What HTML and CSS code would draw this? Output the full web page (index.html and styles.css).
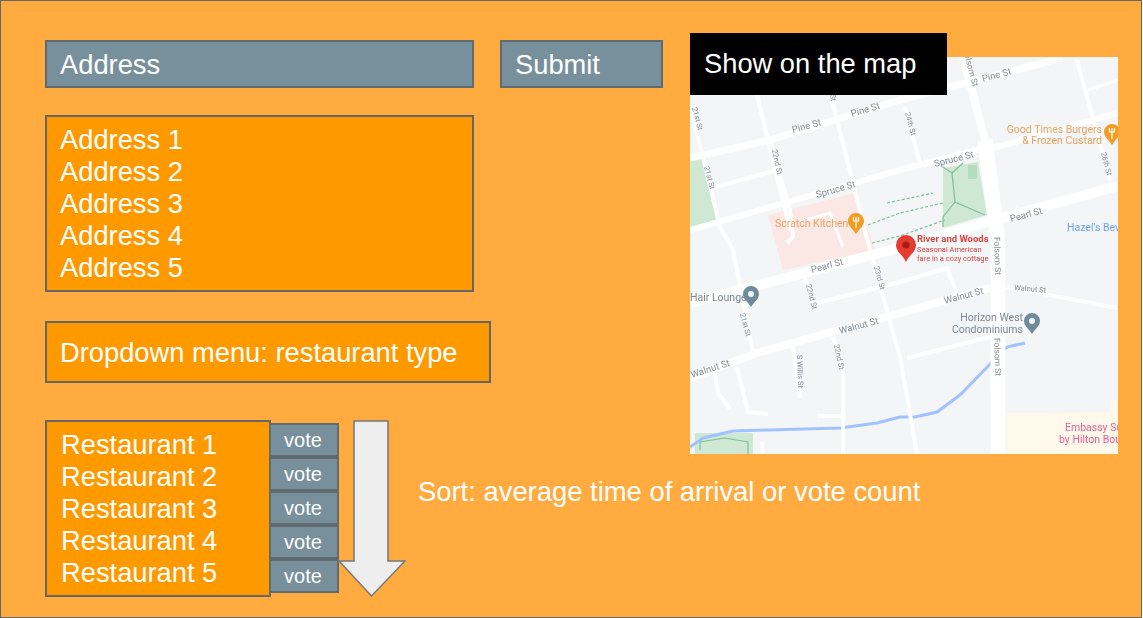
FILE: index.html
```html
<!DOCTYPE html>
<html lang="en">
<head>
    <meta charset="UTF-8">
    <meta name="viewport" content="width=device-width, initial-scale=1.0">
    <title>Restaurant Picker</title>
    <link rel="stylesheet" href="styles.css">
</head>
<body>
    <div class="frame">
        <!-- Left column -->
        <div class="left">
            <div class="search">
                <div class="box slate address">Address</div>
                <div class="box slate submit">Submit</div>
            </div>

            <div class="box orange results">
                <div>Address 1</div>
                <div>Address 2</div>
                <div>Address 3</div>
                <div>Address 4</div>
                <div>Address 5</div>
            </div>

            <div class="box orange dropdown">Dropdown menu: restaurant type</div>

            <div class="restaurants">
                <div class="box orange restaurant-list">
                    <div>Restaurant 1</div>
                    <div>Restaurant 2</div>
                    <div>Restaurant 3</div>
                    <div>Restaurant 4</div>
                    <div>Restaurant 5</div>
                </div>
                <div class="votes">
                    <div class="vote">vote</div>
                    <div class="vote">vote</div>
                    <div class="vote">vote</div>
                    <div class="vote">vote</div>
                    <div class="vote">vote</div>
                </div>
                <svg class="arrow" width="68" height="178" viewBox="0 0 68 178">
                    <path d="M16 1H50V141H67L33.500 176L1 141H16Z" fill="#eeeeee" stroke="#777777" stroke-width="1.500"/>
                </svg>
                <div class="sort">Sort: average time of arrival or vote count</div>
            </div>
        </div>

        <!-- Map -->
        <div class="map">
            <div class="map-label">Show on the map</div>
            <svg class="map-art" width="428" height="397" viewBox="690 57 428 397">
                <rect x="690" y="57" width="428" height="397" fill="#f4f5f7"/>

                <!-- Areas -->
                <polygon points="690,160 705,157 719,222 690,230" fill="#cfe8d4"/>
                <polygon points="768,215 855,193 875,250 783,270" fill="#fbe7e4"/>
                <polygon points="943,168 978,162 987,215 943,228" fill="#cfe8d4"/>
                <rect x="968" y="165" width="9" height="14" fill="#b5dcbd"/>
                <polygon points="695,433 753,433 753,454 695,454" fill="#cfe8d4"/>
                <polygon points="1007,413 1110,412 1110,400 1118,400 1118,454 1007,454" fill="#fef9ea"/>

                <!-- Creek, roads cross over it -->
                <polyline fill="none" stroke="#a0c3ff" stroke-width="3" points="690,447 703,438 733,431 840,428 877,423 900,417 915,417 937,412 960,395 992,362 1007,347 1025,343"/>

                <!-- Roads -->
                <g fill="none" stroke="#ffffff" stroke-linejoin="round">
                    <polyline stroke-width="7" points="690,158 770,140 900,100 977,80 1043,63 1062,57"/>
                    <polyline stroke-width="6" points="690,230 900,170 977,150 997,147 1118,113"/>
                    <polyline stroke-width="10" points="690,303 880,253 987,222 1118,186"/>
                    <polyline stroke-width="8" points="690,378 757,353 900,313 990,288"/>
                    <polyline stroke-width="4" points="1007,287 1117,308"/>
                    <polyline stroke-width="8" points="963,57 985,140"/>
                    <polyline stroke-width="15" points="985,140 997,233 998,250 998,454"/>
                    <polyline stroke-width="4" points="757,95 790,230"/>
                    <polyline stroke-width="4" points="830,93 837,120 870,250 900,357 917,454"/>
                    <polyline stroke-width="4" points="690,107 703,157 720,227 733,250 753,352"/>
                    <polyline stroke-width="4" points="770,140 790,210 793,237 787,243"/>
                    <polyline stroke-width="3" points="800,222 830,213 843,247"/>
                    <polyline stroke-width="4" points="805,278 815,310"/>
                    <polyline stroke-width="4" points="833,337 843,370 843,454"/>
                    <polyline stroke-width="4" points="905,107 920,163"/>
                    <polyline stroke-width="4" points="1077,60 1110,180"/>
                    <polyline stroke-width="3" points="1088,90 1118,80"/>
                    <polyline stroke-width="4" points="713,188 777,170"/>
                    <polyline stroke-width="4" points="817,303 900,282 947,268 957,293"/>
                    <polyline stroke-width="4" points="907,358 990,337"/>
                    <polyline stroke-width="4" points="737,367 748,412 768,414"/>
                    <polyline stroke-width="4" points="715,373 718,393 730,409"/>
                    <polyline stroke-width="4" points="793,347 800,398"/>
                    <polyline stroke-width="4" points="817,416 843,416"/>
                    <polyline stroke-width="4" points="762,442 763,454"/>
                </g>

                <!-- Park paths -->
                <g fill="none" stroke="#7fc096" stroke-width="1.200">
                    <polyline points="943,167 952,173 955,202 985,215"/>
                    <polyline points="963,163 952,173"/>
                    <polyline points="955,202 943,217 943,227"/>
                    <polyline points="700,450 700,442 725,438 748,442 748,454"/>
                    <g stroke-dasharray="3 2">
                        <polyline points="887,203 933,193"/>
                        <polyline points="868,225 900,213 943,203"/>
                        <polyline points="872,243 900,236 945,220"/>
                    </g>
                </g>

                <!-- Street names -->
                <g class="street">
                    <text transform="translate(793,133) rotate(-15)">Pine St</text>
                    <text transform="translate(852,117) rotate(-17)">Pine St</text>
                    <text transform="translate(983,82) rotate(-15)">Pine St</text>
                    <text transform="translate(817,198) rotate(-16)">Spruce St</text>
                    <text transform="translate(935,167) rotate(-14)">Spruce St</text>
                    <text transform="translate(812,273) rotate(-15)">Pearl St</text>
                    <text transform="translate(1011,222) rotate(-15)">Pearl St</text>
                    <text transform="translate(692,378) rotate(-18)">Walnut St</text>
                    <text transform="translate(840,334) rotate(-15)">Walnut St</text>
                    <text transform="translate(945,304) rotate(-15)">Walnut St</text>
                    <text class="tiny" transform="translate(1014,290) rotate(5)">Walnut St</text>
                    <text transform="translate(994,338) rotate(88)" class="small">Folsom St</text>
                    <text transform="translate(994,237) rotate(88)" class="small">Folsom St</text>
                    <text transform="translate(963,50) rotate(75)" class="small">Folsom St</text>
                    <text class="tiny" transform="translate(772,150) rotate(78)">22nd St</text>
                    <text class="tiny" transform="translate(692,108) rotate(75)">21st St</text>
                    <text class="tiny" transform="translate(704,167) rotate(75)">21st St</text>
                    <text class="tiny" transform="translate(740,314) rotate(75)">21st St</text>
                    <text class="tiny" transform="translate(806,285) rotate(75)">22nd St</text>
                    <text class="tiny" transform="translate(834,345) rotate(78)">22nd St</text>
                    <text class="tiny" transform="translate(797,355) rotate(88)">S Willis St</text>
                    <text class="tiny" transform="translate(874,267) rotate(75)">23rd St</text>
                    <text class="tiny" transform="translate(905,113) rotate(75)">24th St</text>
                    <text class="tiny" transform="translate(1101,153) rotate(75)">26th St</text>
                    <text class="tiny" transform="translate(827,78) rotate(80)">23rd St</text>
                </g>

                <!-- Places -->
                <g class="place">
                    <text x="775" y="227" fill="#e8a45e">Scratch Kitchen</text>
                    <text x="1102" y="133" text-anchor="end" fill="#e8a45e">Good Times Burgers</text>
                    <text x="1102" y="144" text-anchor="end" fill="#e8a45e">&amp; Frozen Custard</text>
                    <text x="1067" y="231" fill="#6ba5f2">Hazel's Bev</text>
                    <text x="690" y="301" fill="#7b8a96">Hair Lounge</text>
                    <text x="1023" y="321" text-anchor="end" fill="#7b8a96">Horizon West</text>
                    <text x="1023" y="333" text-anchor="end" fill="#7b8a96">Condominiums</text>
                    <text x="1065" y="431" fill="#ee5d94">Embassy Su</text>
                    <text x="1059" y="443" fill="#ee5d94">by Hilton Bou</text>
                    <text x="917" y="242" fill="#d8453f" font-weight="bold" class="red-name">River and Woods</text>
                    <text x="917" y="252" fill="#d8453f" class="red-sub">Seasonal American</text>
                    <text x="917" y="261" fill="#d8453f" class="red-sub">fare in a cozy cottage</text>
                </g>

                <!-- Pins -->
                <path d="M906 235a10 10 0 0 1 10 10c0 7-7 10-10 17c-3-7-10-10-10-17a10 10 0 0 1 10-10Z" fill="#e53b30"/>
                <circle cx="906" cy="245" r="3.500" fill="#a61b14"/>
                <path d="M856 213a8 8 0 0 1 8 8c0 5-5 8-8 13c-3-5-8-8-8-13a8 8 0 0 1 8-8Z" fill="#f29c24"/>
                <path d="M853.500 217v4h5v-4M856 217v11" fill="none" stroke="#ffffff" stroke-width="1.200"/>
                <path d="M1112 124a8 8 0 0 1 8 8c0 5-5 8-8 13c-3-5-8-8-8-13a8 8 0 0 1 8-8Z" fill="#f29c24"/>
                <path d="M1109.500 128v4h5v-4M1112 128v11" fill="none" stroke="#ffffff" stroke-width="1.200"/>
                <path d="M751 286a8 8 0 0 1 8 8c0 5-5 8-8 13c-3-5-8-8-8-13a8 8 0 0 1 8-8Z" fill="#6f8b9b"/>
                <circle cx="751" cy="294" r="3" fill="#f4f5f7"/>
                <path d="M1032 313a8 8 0 0 1 8 8c0 5-5 8-8 13c-3-5-8-8-8-13a8 8 0 0 1 8-8Z" fill="#6f8b9b"/>
                <circle cx="1032" cy="321" r="3" fill="#f4f5f7"/>
            </svg>
        </div>
    </div>
</body>
</html>
```

FILE: styles.css
```css
/* General Styling */
* {
    box-sizing: border-box;
}
body {
    margin: 0;
    background: #fff;
    font-family: "Liberation Sans", Arial, sans-serif;
    color: #fff;
}
.frame {
    display: flex;
    width: 1142px;
    height: 618px;
    padding: 39px 0 0 44px;
    border: 1px solid #666;
    background: #ffab40;
    overflow: hidden;
}

/* Boxes */
.left {
    width: 645px;
    flex-shrink: 0;
}
.box {
    border: 2px solid #666;
    font-size: 27.300px;
    line-height: 32px;
    padding-left: 13px;
}
.slate {
    background: #78909c;
    border-color: #5f6b70;
}
.orange {
    background: #ff9900;
}

/* Search row */
.search {
    display: flex;
    gap: 26px;
}
.address {
    width: 429px;
    height: 48px;
    padding-top: 7px;
}
.submit {
    width: 163px;
    height: 48px;
    padding-top: 7px;
}
.results {
    width: 429px;
    height: 177px;
    margin-top: 27px;
    padding-top: 7px;
}
.dropdown {
    width: 446px;
    height: 62px;
    margin-top: 29px;
    padding-top: 14px;
}

/* Restaurants */
.restaurants {
    display: flex;
    align-items: flex-start;
    margin-top: 37px;
}
.restaurant-list {
    flex-shrink: 0;
    width: 226px;
    height: 177px;
    padding: 7px 0 0 14px;
}
.votes {
    flex-shrink: 0;
    width: 70px;
    margin: 3px 0 0 -2px;
}
.vote {
    height: 34px;
    border: 2px solid #5f6b70;
    padding-right: 2px;
    background: #78909c;
    font-size: 20px;
    line-height: 30px;
    text-align: center;
}
.arrow {
    flex-shrink: 0;
    margin-left: -1px;
}
.sort {
    flex-shrink: 0;
    margin: 56px 0 0 12px;
    font-size: 27.400px;
    line-height: 32px;
    white-space: nowrap;
}

/* Map */
.map {
    position: relative;
    width: 428px;
    height: 397px;
    margin-top: 17px;
}
.map-art {
    display: block;
    filter: blur(0.6px);
}
.map-label {
    position: absolute;
    top: -24px;
    left: 0;
    z-index: 1;
    width: 257px;
    height: 62px;
    padding: 15px 0 0 14px;
    background: #000;
    font-size: 27.300px;
    line-height: 32px;
}
.street text {
    font-family: Roboto, sans-serif;
    font-size: 9.500px;
    fill: #848d96;
}
.street .small {
    font-size: 8.500px;
}
.street .tiny {
    font-size: 7.500px;
}
.place text {
    font-family: Roboto, sans-serif;
    font-size: 10.500px;
}
.place .red-name {
    font-size: 9.500px;
}
.place .red-sub {
    font-size: 7.500px;
}
```
